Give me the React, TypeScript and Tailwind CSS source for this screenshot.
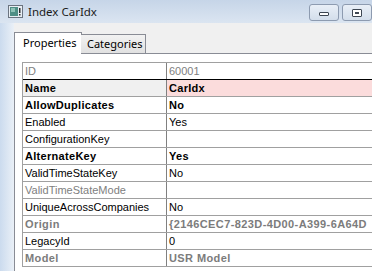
import React from 'react';

type Row = {
  label: string;
  value: string;
  labelStyle?: 'bold' | 'gray' | 'grayBold' | 'normal';
  valueStyle?: 'bold' | 'gray' | 'grayBold' | 'normal';
  selected?: boolean;
};

const rows: Row[] = [
  { label: 'ID', value: '60001', labelStyle: 'gray', valueStyle: 'gray' },
  { label: 'Name', value: 'CarIdx', labelStyle: 'bold', valueStyle: 'bold', selected: true },
  { label: 'AllowDuplicates', value: 'No', labelStyle: 'bold', valueStyle: 'bold' },
  { label: 'Enabled', value: 'Yes' },
  { label: 'ConfigurationKey', value: '' },
  { label: 'AlternateKey', value: 'Yes', labelStyle: 'bold', valueStyle: 'bold' },
  { label: 'ValidTimeStateKey', value: 'No' },
  { label: 'ValidTimeStateMode', value: '', labelStyle: 'gray' },
  { label: 'UniqueAcrossCompanies', value: 'No' },
  { label: 'Origin', value: '{2146CEC7-823D-4D00-A399-6A64D', labelStyle: 'grayBold', valueStyle: 'grayBold' },
  { label: 'LegacyId', value: '0' },
  { label: 'Model', value: 'USR Model', labelStyle: 'grayBold', valueStyle: 'grayBold' },
];

const textCls = (s?: Row['labelStyle']) => {
  if (s === 'bold') return 'font-bold text-black tracking-[0.3px]';
  if (s === 'gray') return 'text-[#808080]';
  if (s === 'grayBold') return 'font-bold text-[#7c7c7c] tracking-[0.4px]';
  return 'text-black';
};

function WindowIcon() {
  return (
    <svg width="15" height="13" viewBox="0 0 15 13">
      <rect x="0.5" y="0.5" width="14" height="12" fill="#e8eef4" stroke="#6b7480" />
      <rect x="2" y="2" width="8" height="9" fill="#4f8f86" />
      <rect x="3" y="3" width="4" height="4" fill="#8fc3b8" />
      <rect x="11" y="3" width="1.5" height="5" fill="#303030" />
      <rect x="11" y="9" width="1.5" height="1.5" fill="#303030" />
    </svg>
  );
}

export default function App() {
  return (
    <div className="w-[372px] h-[271px] overflow-hidden bg-[#f0f0f0] flex flex-col" style={{ fontFamily: '"Liberation Sans", Arial, sans-serif' }}>
      {/* title bar */}
      <div className="h-[23px] shrink-0 flex items-center bg-gradient-to-b from-[#c6d5e8] to-[#dbe5f1]">
        <div className="ml-[8px] mt-[-1px]">
          <WindowIcon />
        </div>
        <span className="ml-[5px] text-[11.5px] text-[#1b1b1b]" style={{ fontFamily: '"Noto Sans", "Open Sans", sans-serif' }}>
          Index CarIdx
        </span>
        <div className="ml-auto flex gap-[3px] self-start mt-[4px]">
          <div className="w-[30px] h-[17px] rounded-[3px] border border-[#8d9bb0] bg-gradient-to-b from-[#e9eff7] to-[#d3deeb] flex items-center justify-center">
            <div className="w-[10px] h-[4px] border border-[#3d4652] rounded-[1px] bg-white mt-[3px]" />
          </div>
          <div className="w-[30px] h-[17px] rounded-[3px] border border-[#8d9bb0] bg-gradient-to-b from-[#e9eff7] to-[#d3deeb] flex items-center justify-center">
            <div className="w-[10px] h-[8px] border border-[#3d4652] rounded-[1px] bg-white flex items-center justify-center">
              <div className="w-[4px] h-[2px] border border-[#3d4652]" />
            </div>
          </div>
        </div>
      </div>

      {/* body */}
      <div className="flex flex-1 min-h-0">
        <div className="w-[14px] shrink-0 bg-gradient-to-r from-[#cbdbee] to-[#eaf0f7]" />
        <div className="flex-1 flex flex-col pt-[9px] min-w-0">
          {/* tabs */}
          <div className="flex items-end h-[21px] relative z-10 text-[11px]" style={{ fontFamily: '"Noto Sans", "Open Sans", sans-serif' }}>
            <div className="w-[68px] h-[22px] border border-b-0 border-[#898c95] bg-white flex items-start pl-[8px] pt-[2px] text-black self-start -mb-[1px]">
              Properties
            </div>
            <div className="w-[65px] h-[19px] -ml-[1px] border border-l-0 border-b-0 border-[#898c95] bg-gradient-to-b from-[#f2f2f2] to-[#e1e1e1] flex items-center pl-[6px] text-black">
              Categories
            </div>
          </div>
          {/* tab panel */}
          <div className="flex-1 bg-white border-t border-l border-[#898c95] pl-[7px] pt-[8px] min-w-0 overflow-hidden">
            <div className="border-t border-l border-[#a0a0a0] w-[400px] text-[11px] leading-none">
              {rows.map((r, i) => (
                <div
                  key={r.label}
                  className={`flex h-[17px] border-b ${i === 0 ? 'border-[#000]' : 'border-[#a0a0a0]'}`}
                >
                  <div className={`w-[144px] shrink-0 border-r border-[#808080] pl-[2px] flex items-center whitespace-nowrap ${r.selected ? 'bg-[#f0f0f0]' : ''} ${textCls(r.labelStyle)}`}>
                    {r.label}
                  </div>
                  <div className={`flex-1 pl-[2px] flex items-center whitespace-nowrap overflow-hidden ${r.selected ? 'bg-[#fbdcdc]' : ''} ${textCls(r.valueStyle)}`}>
                    {r.value}
                  </div>
                </div>
              ))}
            </div>
          </div>
        </div>
      </div>
    </div>
  );
}
